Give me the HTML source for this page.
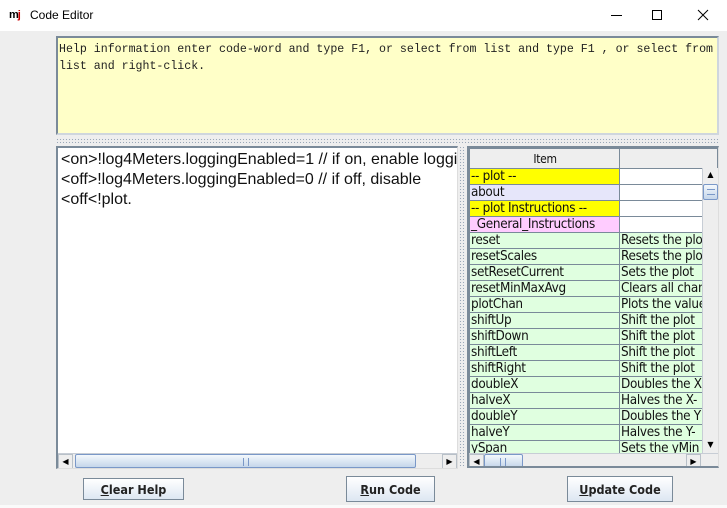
<!DOCTYPE html>
<html><head><style>
*{margin:0;padding:0;box-sizing:border-box}
body{width:727px;height:508px;background:#eeeeee;position:relative;overflow:hidden;font-family:"DejaVu Sans","Liberation Sans",sans-serif}
.a{position:absolute}
#title{left:0;top:0;width:727px;height:31px;background:#fff}
#title .t{left:30px;top:8px;font-size:12px;color:#000;font-family:"Liberation Sans",sans-serif}
#help{left:56px;top:36px;width:663px;height:99px;background:#ffffc8;border:2px solid #7a8a99;border-right-color:#cfd6dd;border-bottom-color:#cfd6dd;font-family:"Liberation Mono",monospace;font-size:11.6px;line-height:17px;color:#222;padding:3px 0 0 1px;white-space:nowrap;overflow:hidden}
.dots{background-image:radial-gradient(#9aa8b8 0.6px,transparent 0.8px);background-size:3px 3px}
#ed{left:56px;top:146px;width:402px;height:323px;background:#fff;border:2px solid #7a8a99;border-right:1px solid #ddd;border-bottom:1px solid #ddd;overflow:hidden}
#ed .txt{left:3px;top:2px;font-family:"Liberation Sans",sans-serif;font-size:16px;line-height:20px;color:#111;white-space:nowrap}
.hs{height:15px;background:#eeeeee;border-top:1px solid #c7cdd5}
.arr{width:15px;height:15px;background:#eee;border:1px solid #b8c0c8;font-size:8px;text-align:center;line-height:13px;color:#000}
.thumb{background:linear-gradient(#f4f8fc,#c5d6ea);border:1px solid #7a98c8;border-radius:2px}
#tb{left:467px;top:146px;width:252px;height:322px;background:#eee;border:2px solid #7a8a99;border-right:1px solid #ddd;overflow:hidden}
table{border-collapse:collapse;font-size:13.4px;font-family:"DejaVu Sans Condensed","DejaVu Sans",sans-serif;letter-spacing:-0.3px}
td{border:1px solid #7a8a99;height:16px;padding:0 0 0 1px;white-space:nowrap;overflow:hidden;line-height:14px;color:#111}
.c1{width:150px;max-width:150px}.c2{width:84px;max-width:84px}
.y{background:#ffff00}.l{background:#e6e6fa}.p{background:#ffccff}.g{background:#e0ffe0}.w{background:#fff}
.btn{height:23px;border:1px solid #7a8a99;background:linear-gradient(#ffffff,#dde7f2);font-size:12.5px;font-weight:bold;text-align:center;line-height:22px;color:#222;font-family:"DejaVu Sans Condensed","DejaVu Sans",sans-serif}
</style></head><body>
<div id="title" class="a">
 <div class="a" style="left:9px;top:9px;width:14px;height:13px;font:bold 11px 'Liberation Sans';color:#000;letter-spacing:-1px">m<span style="color:#c00">j</span></div>
 <div class="a t">Code Editor</div>
 <div class="a" style="left:611px;top:15px;width:11px;height:1px;background:#000"></div>
 <div class="a" style="left:652px;top:10px;width:10px;height:10px;border:1px solid #000"></div>
 <svg class="a" style="left:697px;top:9px" width="12" height="12"><path d="M1 1L11 11M11 1L1 11" stroke="#000" stroke-width="1"/></svg>
</div>
<div id="help" class="a">Help information enter code-word and type F1, or select from list and type F1 , or select from<br>list and right-click.</div>
<div class="a dots" style="left:56px;top:138px;width:663px;height:5px"></div>
<div id="ed" class="a">
 <div class="a txt">&lt;on&gt;!log4Meters.loggingEnabled=1 // if on, enable logging<br>&lt;off&gt;!log4Meters.loggingEnabled=0 // if off, disable<br>&lt;off&lt;!plot.</div>
 <div class="a hs" style="left:0;top:305px;width:400px">
  <div class="a arr" style="left:0;top:0">◀</div>
  <div class="a thumb" style="left:17px;top:0;width:341px;height:14px"><div class="a" style="left:167px;top:3px;width:6px;height:8px;border-left:1px solid #7a98c8;border-right:1px solid #7a98c8"></div></div>
  <div class="a arr" style="left:384px;top:0">▶</div>
 </div>
</div>
<div class="a dots" style="left:459px;top:146px;width:6px;height:322px"></div>
<div id="tb" class="a">
 <table class="a" style="left:0;top:0">
  <tr><td class="c1" style="background:#eee;text-align:center;height:20px;font-size:12px">Item</td><td class="c2" style="background:#eee;width:98px;max-width:98px"></td></tr>
  <tr><td class="c1 y">-- plot --</td><td class="c2 w"></td></tr>
  <tr><td class="c1 l">about</td><td class="c2 w"></td></tr>
  <tr><td class="c1 y">-- plot Instructions --</td><td class="c2 w"></td></tr>
  <tr><td class="c1 p">_General_Instructions</td><td class="c2 w"></td></tr>
  <tr><td class="c1 g">reset</td><td class="c2 g">Resets the plot</td></tr>
  <tr><td class="c1 g">resetScales</td><td class="c2 g">Resets the plot</td></tr>
  <tr><td class="c1 g">setResetCurrent</td><td class="c2 g">Sets the plot</td></tr>
  <tr><td class="c1 g">resetMinMaxAvg</td><td class="c2 g">Clears all chan</td></tr>
  <tr><td class="c1 g">plotChan</td><td class="c2 g">Plots the value</td></tr>
  <tr><td class="c1 g">shiftUp</td><td class="c2 g">Shift the plot</td></tr>
  <tr><td class="c1 g">shiftDown</td><td class="c2 g">Shift the plot</td></tr>
  <tr><td class="c1 g">shiftLeft</td><td class="c2 g">Shift the plot</td></tr>
  <tr><td class="c1 g">shiftRight</td><td class="c2 g">Shift the plot</td></tr>
  <tr><td class="c1 g">doubleX</td><td class="c2 g">Doubles the X</td></tr>
  <tr><td class="c1 g">halveX</td><td class="c2 g">Halves the X-</td></tr>
  <tr><td class="c1 g">doubleY</td><td class="c2 g">Doubles the Y</td></tr>
  <tr><td class="c1 g">halveY</td><td class="c2 g">Halves the Y-</td></tr>
  <tr><td class="c1 g">ySpan</td><td class="c2 g">Sets the yMin</td></tr>
 </table>
 <div class="a" style="left:233px;top:20px;width:17px;height:286px;background:#eee;border-left:1px solid #c7cdd5">
  <div class="a arr" style="left:0;top:0;border:none">▲</div>
  <div class="a thumb" style="left:0;top:16px;width:15px;height:16px"><div class="a" style="left:3px;top:4px;width:8px;height:6px;border-top:1px solid #7a98c8;border-bottom:1px solid #7a98c8"></div></div>
  <div class="a arr" style="left:0;top:270px;border:none">▼</div>
 </div>
 <div class="a hs" style="left:0;top:305px;width:250px">
  <div class="a arr" style="left:0;top:0">◀</div>
  <div class="a thumb" style="left:15px;top:0;width:39px;height:14px"><div class="a" style="left:15px;top:3px;width:6px;height:8px;border-left:1px solid #7a98c8;border-right:1px solid #7a98c8"></div></div>
  <div class="a arr" style="left:217px;top:0">▶</div>
 </div>
</div>
<div class="a btn" style="left:83px;top:478px;width:101px;height:22px;line-height:21px"><u>C</u>lear Help</div>
<div class="a btn" style="left:346px;top:476px;width:89px;height:26px;line-height:25px"><u>R</u>un Code</div>
<div class="a btn" style="left:567px;top:476px;width:106px;height:26px;line-height:25px"><u>U</u>pdate Code</div>
<div class="a" style="left:0;top:505px;width:727px;height:3px;background:#fafafa"></div>
</body></html>
